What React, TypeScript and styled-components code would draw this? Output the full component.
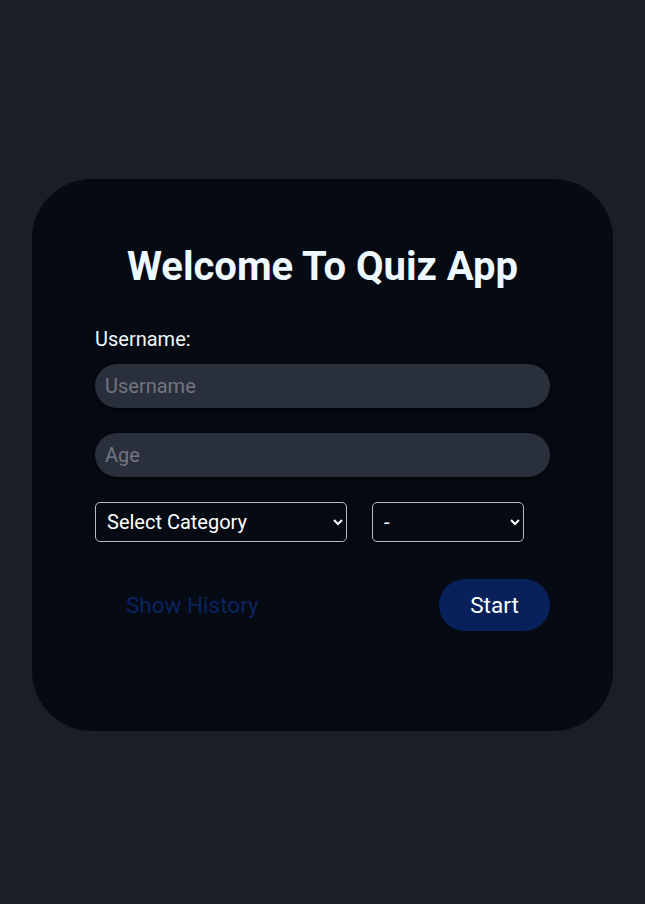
import React from "react";
import styled, { createGlobalStyle } from "styled-components";

const Global = createGlobalStyle`
  html, body { margin: 0; padding: 0; background: #1b1e26; }
  body { font-family: Roboto, "Liberation Sans", sans-serif; }
  * { box-sizing: border-box; }
`;

const Page = styled.div`
  min-height: 904px;
  display: flex;
  justify-content: center;
  align-items: flex-start;
  padding-top: 179px;
`;

const Card = styled.div`
  width: 581px;
  background: #060a13;
  border-radius: 60px;
  padding: 64px 63px 100px;
  display: flex;
  flex-direction: column;
`;

const Title = styled.h1`
  margin: 0 0 38px;
  text-align: center;
  font-size: 40px;
  line-height: 47px;
  font-weight: 700;
  color: #eef8ff;
`;

const Label = styled.label`
  font-size: 20px;
  line-height: 23px;
  color: #eef8ff;
  margin-bottom: 13px;
`;

const Input = styled.input`
  width: 100%;
  height: 44px;
  border: none;
  outline: none;
  border-radius: 22px;
  background: #2a2f3c;
  padding: 0 10px;
  font-family: inherit;
  font-size: 20px;
  color: #eef8ff;
  box-shadow: 0 2px 6px rgba(0, 0, 0, 0.6);
  margin-bottom: 25px;
  &::placeholder { color: #727580; }
`;

const SelectRow = styled.div`
  display: flex;
  gap: 25px;
  margin-bottom: 37px;
`;

const Select = styled.select<{ $w: number }>`
  width: ${(p) => p.$w}px;
  height: 40px;
  background: #060a13;
  color: #ffffff;
  border: 1px solid #b8bbc2;
  border-radius: 5px;
  padding: 0 6px 0 7px;
  font-family: inherit;
  font-size: 20px;
  color-scheme: dark;
  outline: none;
  box-shadow: 0 2px 6px rgba(0, 0, 0, 0.5);
`;

const Actions = styled.div`
  display: flex;
  justify-content: space-between;
  align-items: center;
`;

const LinkButton = styled.button`
  background: none;
  border: none;
  padding: 0 0 0 31px;
  font-family: inherit;
  font-size: 22.5px;
  color: #0a2460;
  cursor: pointer;
`;

const StartButton = styled.button`
  width: 111px;
  height: 52px;
  border: none;
  border-radius: 26px;
  background: #08215a;
  color: #ffffff;
  font-family: inherit;
  font-size: 22.5px;
  cursor: pointer;
`;

export default function App() {
  return (
    <>
      <Global />
      <Page>
        <Card>
          <Title>Welcome To Quiz App</Title>
          <Label htmlFor="username">Username:</Label>
          <Input id="username" placeholder="Username" />
          <Input placeholder="Age" />
          <SelectRow>
            <Select $w={252} defaultValue="">
              <option value="">Select Category</option>
            </Select>
            <Select $w={152} defaultValue="">
              <option value="">-</option>
            </Select>
          </SelectRow>
          <Actions>
            <LinkButton>Show History</LinkButton>
            <StartButton>Start</StartButton>
          </Actions>
        </Card>
      </Page>
    </>
  );
}
